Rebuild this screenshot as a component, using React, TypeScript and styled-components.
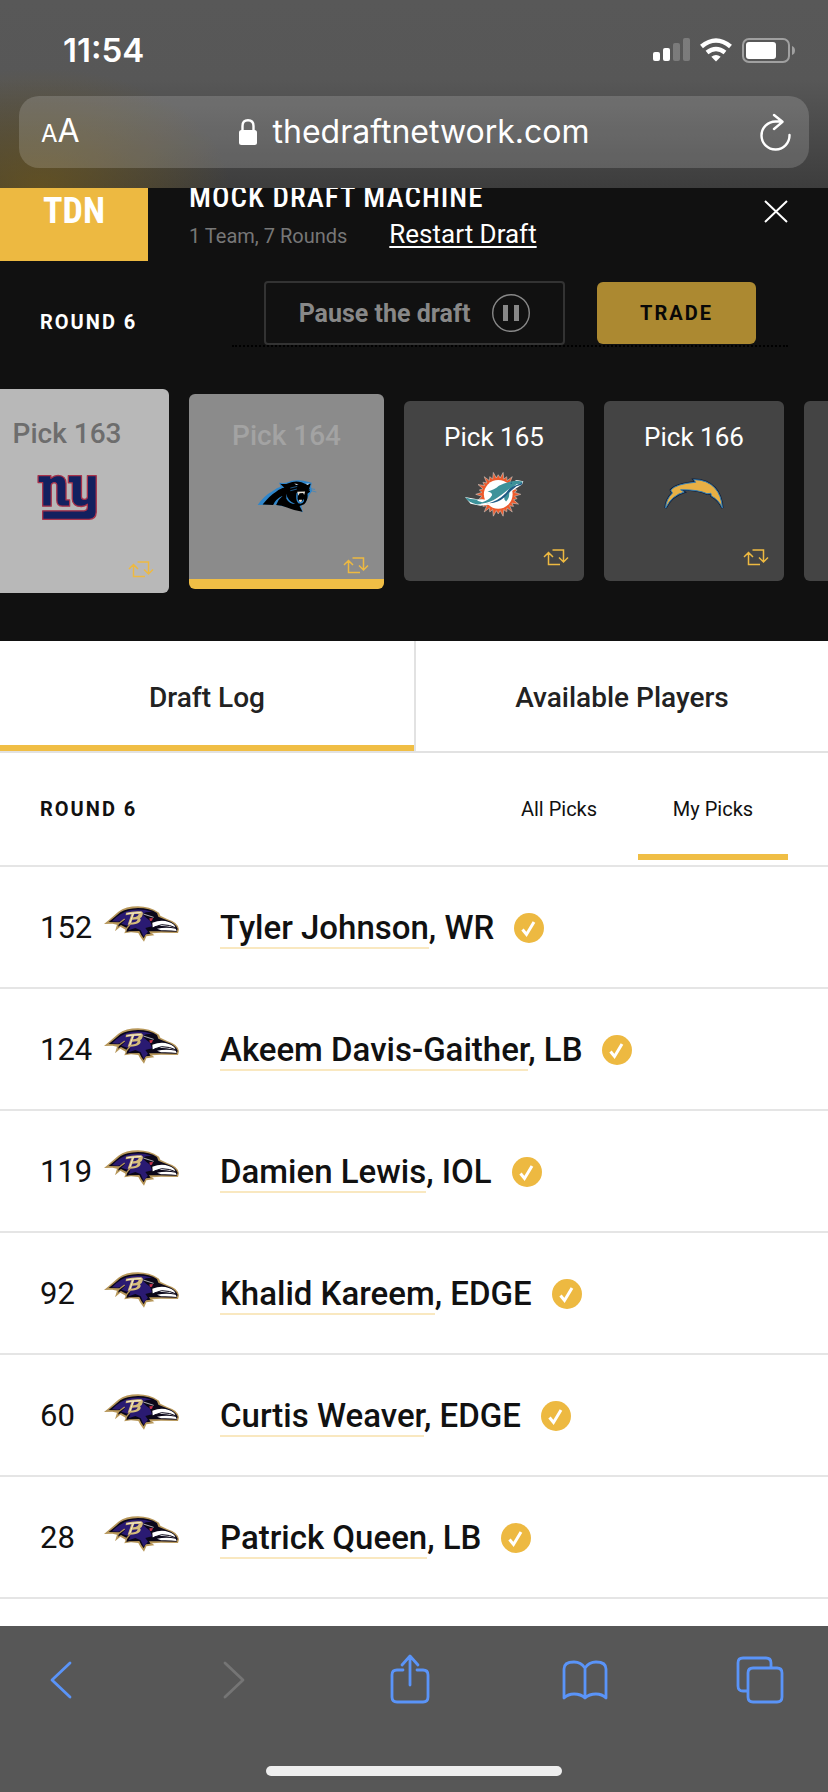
import styled, { createGlobalStyle } from "styled-components";

const GlobalStyle = createGlobalStyle`
  *, *::before, *::after {
    box-sizing: border-box;
  }

  body {
    margin: 0;
    background: #fff;
    color: #111;
    font-family: Roboto, "Noto Sans", sans-serif;
  }

  button {
    padding: 0;
    border: 0;
    background: none;
    color: inherit;
    font: inherit;
    cursor: pointer;
  }

  svg {
    display: block;
  }
`;

const Screen = styled.div`
  display: flex;
  flex-direction: column;
  min-height: 100vh;
  overflow: hidden;
`;

/* ---------- browser chrome ---------- */

const BrowserTop = styled.header`
  position: relative;
  z-index: 1;
  padding: 0 19px 20px;
  background:
    radial-gradient(ellipse 190px 120px at 40px 100%, rgba(112, 88, 24, 0.7), rgba(112, 88, 24, 0)),
    linear-gradient(#585858 0, #575757 80px, #3d3d3d 100%);
  color: #fff;
  font-family: Inter, sans-serif;
`;

const StatusBar = styled.div`
  display: flex;
  align-items: center;
  justify-content: space-between;
  height: 96px;
  padding: 4px 14px 0 44px;
`;

const Clock = styled.span`
  font-size: 33px;
  font-weight: 600;
  line-height: 40px;
`;

const StatusIcons = styled.div`
  display: flex;
  align-items: center;
  gap: 10px;
`;

const AddressBar = styled.div`
  display: grid;
  grid-template-columns: 1fr auto 1fr;
  align-items: center;
  height: 72px;
  padding: 0 18px 0 22px;
  border-radius: 20px;
  background: rgba(255, 255, 255, 0.16);
`;

const TextSizeButton = styled.button`
  justify-self: start;
  font-size: 32px;
  line-height: 40px;
`;

const SmallLetter = styled.span`
  font-size: 24px;
`;

const Address = styled.button`
  display: flex;
  align-items: center;
  gap: 16px;
  padding-right: 4px;
  font-size: 32px;
  line-height: 40px;
`;

const ReloadButton = styled.button`
  display: flex;
  justify-self: end;
`;

const BrowserBottom = styled.footer`
  display: flex;
  flex-direction: column;
  align-items: center;
  justify-content: space-between;
  height: 166px;
  margin-top: auto;
  padding: 28px 0 16px;
  background: #575757;
`;

const Toolbar = styled.nav`
  display: flex;
  align-items: center;
  justify-content: space-between;
  width: 100%;
  padding: 0 44px 0 36px;
`;

const ToolButton = styled.button<{ $disabled?: boolean }>`
  display: flex;
  color: ${({ $disabled }) => ($disabled ? "#757575" : "#5a94f8")};
`;

const HomeIndicator = styled.div`
  width: 296px;
  height: 10px;
  border-radius: 5px;
  background: #eee;
`;

/* ---------- draft header ---------- */

const DraftPanel = styled.section`
  padding-bottom: 48px;
  background: #111;
  color: #fff;
`;

// scrolled partly under the browser bar
const DraftHeader = styled.div`
  display: flex;
  height: 97px;
  margin-top: -24px;
`;

const Brand = styled.div`
  display: flex;
  align-items: center;
  justify-content: center;
  width: 148px;
  padding-bottom: 4px;
  background: #edb941;
  font-family: "Roboto Condensed", Roboto, sans-serif;
  font-size: 36px;
  font-weight: 700;
  line-height: 40px;
`;

const DraftInfo = styled.div`
  flex: 1;
  padding: 13px 0 0 41px;
`;

const DraftTitle = styled.h1`
  margin: 0;
  font-family: "Roboto Condensed", Roboto, sans-serif;
  font-size: 29px;
  font-weight: 500;
  letter-spacing: 1px;
  line-height: 40px;
`;

const DraftMeta = styled.div`
  display: flex;
  align-items: baseline;
  gap: 42px;
  color: #777;
  font-size: 20px;
  line-height: 34px;
`;

const RestartLink = styled.a`
  color: #fff;
  font-size: 26px;
  text-underline-offset: 3px;
`;

const CloseButton = styled.button`
  align-self: flex-start;
  margin: 35px 40px 0 0;
`;

const Controls = styled.div`
  display: flex;
  align-items: flex-end;
  justify-content: space-between;
  padding: 20px 40px 0;
`;

const RoundLabel = styled.h2`
  margin: 0;
  font-size: 20px;
  font-weight: 700;
  letter-spacing: 2px;
  line-height: 28px;
`;

const ControlsLabel = styled(RoundLabel)`
  padding-bottom: 11px;
`;

const Actions = styled.div`
  display: flex;
  align-items: center;
  gap: 32px;
  padding: 0 32px;
  border-bottom: 2px dotted #000;
`;

const PauseButton = styled.button`
  display: flex;
  align-items: center;
  justify-content: center;
  gap: 22px;
  min-width: 301px;
  height: 64px;
  border: 2px solid #333;
  border-radius: 4px;
  color: #888;
  font-size: 25px;
  font-weight: 700;
`;

const TradeButton = styled.button`
  min-width: 159px;
  height: 62px;
  border-radius: 6px;
  background: #ac8931;
  color: #080808;
  font-size: 20px;
  font-weight: 700;
  letter-spacing: 2px;
`;

const PickRail = styled.ol`
  display: flex;
  align-items: center;
  gap: 20px;
  margin: 42px 0 0 -35px;
  padding: 0;
  list-style: none;
`;

type CardState = "past" | "current" | "next";

const cardStyles = {
  past: { size: 204, top: 29, gap: 17, text: 28, weight: 500, color: "#6d6d6d", background: "#b8b8b8" },
  current: {
    size: 195,
    top: 26,
    gap: 14,
    text: 28,
    weight: 500,
    color: "#a3a3a3",
    background: "linear-gradient(#8b8b8b 185px, #f0be45 185px)",
  },
  next: { size: 180, top: 20, gap: 11, text: 26, weight: 400, color: "#fff", background: "#444" },
};

const PickCard = styled.li<{ $state: CardState }>`
  display: flex;
  flex: none;
  flex-direction: column;
  align-items: center;
  gap: ${({ $state }) => cardStyles[$state].gap}px;
  width: ${({ $state }) => cardStyles[$state].size}px;
  height: ${({ $state }) => cardStyles[$state].size}px;
  padding-top: ${({ $state }) => cardStyles[$state].top}px;
  border-radius: 6px;
  background: ${({ $state }) => cardStyles[$state].background};
  color: ${({ $state }) => cardStyles[$state].color};
  font-size: ${({ $state }) => cardStyles[$state].text}px;
  font-weight: ${({ $state }) => cardStyles[$state].weight};
  line-height: 32px;
`;

const TeamLogo = styled.div`
  display: flex;
  align-items: center;
  height: 60px;
`;

const SwapIcon = styled.svg`
  align-self: flex-end;
  margin: auto 15px 15px 0;
`;

/* ---------- draft log ---------- */

const Tabs = styled.div`
  display: grid;
  grid-template-columns: 1fr 1fr;
  border-bottom: 2px solid #e2e2e2;
`;

const Tab = styled.button<{ $active?: boolean }>`
  height: 110px;
  padding-top: ${({ $active }) => ($active ? 8 : 2)}px;
  border-bottom: ${({ $active }) => ($active ? "6px solid #f0be45" : "0")};
  color: #222;
  font-size: 28px;
  font-weight: 500;

  & + & {
    border-left: 2px solid #e2e2e2;
  }
`;

const LogHeader = styled.div`
  display: flex;
  align-items: center;
  justify-content: space-between;
  height: 114px;
  padding: 0 40px;
  border-bottom: 2px solid #e5e5e5;
`;

const Filters = styled.div`
  display: flex;
  align-self: flex-end;
  gap: 4px;
  padding-bottom: 5px;
`;

const Filter = styled.button<{ $active?: boolean }>`
  width: 150px;
  height: 107px;
  padding-top: 10px;
  border-bottom: 6px solid ${({ $active }) => ($active ? "#f0be45" : "transparent")};
  font-size: 20px;
`;

const LogList = styled.ul`
  margin: 0;
  padding: 0 0 27px;
  list-style: none;
`;

const LogRow = styled.li`
  display: flex;
  align-items: center;
  height: 122px;
  padding: 2px 40px 0;
  border-bottom: 2px solid #e5e5e5;
`;

const PickNumber = styled.span`
  width: 64px;
  font-size: 31px;
  line-height: 40px;
`;

const RowLogo = styled.div`
  padding-bottom: 8px;
`;

const PlayerText = styled.span`
  margin: 0 20px 0 40px;
  font-size: 33px;
  font-weight: 500;
  line-height: 40px;
`;

const PlayerLink = styled.a`
  border-bottom: 2px solid #f9e8c0;
  color: inherit;
  text-decoration: none;
`;

/* ---------- drawings ---------- */

const Giants = () => (
  <svg width="60" height="46" viewBox="50 70 182 140" aria-label="New York Giants">
    <g fill="#12205f" stroke="#a8324a" strokeWidth="4" strokeLinejoin="round">
      <path d="M53 75H92V83Q102 74 114 74Q138 75 138 99V149H149V168H127Q110 168 110 150V105Q110 96 102 96Q93 97 93 106V168H67V96H53Z" />
      <path d="M145 75H185V139Q185 147 194 147Q203 147 203 139V75H230V186Q229 208 208 208H67V182H193Q203 181 203 170V162Q196 169 185 169Q157 168 157 145V97H145Z" />
    </g>
  </svg>
);

const Panthers = () => (
  <svg width="60" height="34" viewBox="50 56 182 102" aria-label="Carolina Panthers">
    <path fill="#2f86cb" d="M52 134Q72 106 98 92Q110 82 122 79L117 67Q130 68 139 67Q163 56 191 61L216 67L214 79L217 92L208 105L198 126L184 138L189 156L160 144L102 133Z" />
    <path fill="#000" d="M67 133Q88 106 108 94Q122 83 133 82L120 70Q137 72 145 68Q164 60 185 65L199 71L213 70L209 82L211 94L203 100Q206 119 193 132L179 137L188 155Q162 151 141 142Q125 134 108 134Q114 117 128 106Q106 116 99 134Z" />
    <path fill="#2f86cb" d="M139 100Q142 122 166 131Q148 131 139 115ZM170 98L174 96L173 116Q178 129 187 123L191 116L193 122Q187 134 175 129Q166 119 170 98Z" />
    <path fill="#e6dfd5" d="M172 94L196 93L193 104L190 98L179 99L176 106ZM178 118L187 118L184 126L177 123Z" />
    <path fill="#d8e6ef" d="M163 69L176 71L169 74ZM197 70L210 69L204 74Z" />
    <path stroke="#2f86cb" strokeWidth="2" d="M151 83L172 78M151 91L171 86M208 84L226 87M207 89L230 95" />
  </svg>
);

const sunPoints = Array.from({ length: 56 }, (_, i) => {
  const angle = (i * Math.PI) / 28;
  const radius = i % 2 ? 50 : i % 4 ? 60 : 69;
  return `${Math.round(775 + radius * Math.cos(angle))},${Math.round(103 + radius * Math.sin(angle))}`;
}).join(" ");

const Dolphins = () => (
  <svg width="60" height="46" viewBox="670 32 184 140" aria-label="Miami Dolphins">
    <polygon points={sunPoints} fill="#ee5a2b" stroke="#c9bfba" strokeWidth="2" />
    <circle cx="775" cy="103" r="44" fill="#fff" />
    <path fill="#fff" d="M673 111L711 118L736 119Q766 105 788 82L831 59L852 63L848 73L807 100L798 126L784 119L762 133L720 138L690 132Z" />
    <path fill="#3d929a" d="M673 112Q694 120 712 119L711 123L726 127Q747 122 756 106Q757 97 742 94Q763 90 777 77Q799 64 832 61L850 64L847 70L831 72Q809 88 798 101Q785 116 770 123Q744 134 710 134Q684 128 673 112ZM793 110L809 95Q810 116 799 125L794 119Z" />
    <path fill="#205b86" d="M755 124Q779 117 800 94Q818 77 835 73L849 67L847 74L831 78Q812 93 795 111Q775 129 748 130Z" />
    <path fill="#fff" d="M722 132Q751 128 771 114Q796 97 810 84Q801 98 784 112Q761 130 722 135Z" />
    <circle cx="815" cy="69" r="2" fill="#205b86" />
  </svg>
);

const boltPath =
  "M75 144Q76 118 96 98L91 89Q107 70 167 65L161 57Q203 57 226 83Q246 105 249 144Q238 119 215 107L214 99L202 100Q174 87 121 88L132 95Q94 105 75 144Z";

const Chargers = () => (
  <svg width="60" height="32" viewBox="71 52 182 98" aria-label="Los Angeles Chargers">
    <path fill="#11203a" stroke="#11203a" strokeWidth="7" d={boltPath} />
    <path fill="#e7b045" stroke="#337db4" strokeWidth="3" d={boltPath} />
  </svg>
);

const Ravens = () => (
  <svg width="76" height="38" viewBox="42 48 228 114" aria-label="Baltimore Ravens">
    <path fill="#b7975a" d="M42 105Q68 83 85 68Q107 52 144 52Q178 52 207 71L211 80L233 91Q263 99 267 121L264 132L213 131L186 133L193 139L169 142L162 158L151 143L145 132L123 130L103 133L107 122L91 113L75 127L81 107L67 104Z" />
    <path fill="#0b0719" d="M56 99Q75 84 91 70Q110 58 144 57Q179 57 201 72L205 83L231 94Q256 102 263 119L260 128L206 127L177 127L182 134L167 136L161 148L154 138L148 126L117 127L109 129L112 118L93 108L84 113L88 100Z" />
    <path fill="#2a1a72" d="M66 97Q92 70 120 64Q153 57 186 68L168 70L157 76Q168 87 180 95L186 112L166 117L174 128L161 143L152 124L136 117L116 124L121 113L94 104L106 92L84 98Z" />
    <path fill="#fff" d="M187 101Q214 91 236 99Q253 104 257 116L229 112L207 110L188 115Z" />
    <path fill="#fff" d="M201 119Q229 114 257 119L260 126Q239 123 213 124Z" />
    <path fill="none" stroke="#0b0719" strokeWidth="3" d="M193 114L215 107Q240 107 259 117" />
    <path fill="#d5bc7b" fillRule="evenodd" d="M108 71Q132 65 153 67Q161 69 158 77Q156 85 150 88Q155 93 148 100Q140 108 113 107L124 76L107 79ZM133 75L129 85Q145 84 146 75ZM127 92L124 101Q141 101 143 91Z" />
    <path fill="none" stroke="#fff" strokeWidth="2" d="M112 74L154 70M130 73L119 104M160 75L191 85" />
    <path fill="#c5304a" d="M178 88L189 87L186 95L180 96Z" />
    <path fill="none" stroke="#b7975a" strokeWidth="4" d="M81 107L104 90M107 122L122 104" />
  </svg>
);

const Swap = () => (
  <SwapIcon width="26" height="17" viewBox="0 0 26 17" fill="none" stroke="#edb941" strokeWidth="1.5">
    <path d="M1 8L5.5 3.5L10 8M5.5 4V15.5H17M9.5 1H20.5V12M16 8.5L20.5 13L25 8.5" />
  </SwapIcon>
);

const Check = () => (
  <svg width="30" height="30" viewBox="0 0 30 30" aria-label="My pick">
    <circle cx="15" cy="15" r="15" fill="#edb941" />
    <path d="M8.5 16.5L12.5 21.5L20 9" fill="none" stroke="#fff" strokeWidth="3" />
  </svg>
);

const SignalIcon = () => (
  <svg width="37" height="24" viewBox="0 0 37 24" fill="#fff">
    <rect y="14" width="7" height="9" rx="2" />
    <rect x="10" y="10" width="7" height="13" rx="2" />
    <rect x="20" y="5" width="7" height="18" rx="2" opacity=".22" />
    <rect x="30" width="7" height="23" rx="2" opacity=".22" />
  </svg>
);

const WifiIcon = () => (
  <svg width="32" height="24" viewBox="0 0 32 24" fill="none" stroke="#fff" strokeWidth="4.5">
    <path d="M1.5 8.5Q16-3.5 30.5 8.5M7 14.5Q16 7.5 25 14.5" />
    <path d="M16 23.5L11.3 18.7Q16 15.5 20.7 18.7Z" fill="#fff" stroke="none" />
  </svg>
);

const BatteryIcon = () => (
  <svg width="53" height="25" viewBox="0 0 53 25">
    <rect x="1" y="1" width="46" height="23" rx="6" fill="none" stroke="#a0a0a0" strokeWidth="2" />
    <rect x="4" y="4" width="30" height="17" rx="3" fill="#fff" />
    <path d="M50 8Q53 9 53 12.5Q53 16 50 17Z" fill="#a0a0a0" />
  </svg>
);

const LockIcon = () => (
  <svg width="18" height="26" viewBox="0 0 18 26">
    <path d="M3.5 13V7Q3.5 1.2 9 1.2Q14.5 1.2 14.5 7V13" fill="none" stroke="#fff" strokeWidth="2.4" />
    <rect y="11" width="18" height="15" rx="2.5" fill="#fff" />
  </svg>
);

const ReloadIcon = () => (
  <svg
    width="32"
    height="38"
    viewBox="0 0 32 38"
    fill="none"
    stroke="#fff"
    strokeWidth="2.4"
    strokeLinecap="round"
    strokeLinejoin="round"
  >
    <path d="M30.5 22A14 14 0 1 1 16.5 8.5H22M15 2L23.5 8.8L15 16" />
  </svg>
);

const CloseIcon = () => (
  <svg width="24" height="24" viewBox="0 0 24 24" fill="none" stroke="#fff" strokeWidth="2">
    <path d="M1 2L23 23M23 2L1 23" />
  </svg>
);

const PauseIcon = () => (
  <svg width="38" height="38" viewBox="0 0 38 38">
    <circle cx="19" cy="19" r="18.3" fill="none" stroke="#888" strokeWidth="1.4" />
    <path d="M11 11H16V27H11ZM22 11H27V27H22Z" fill="#888" />
  </svg>
);

const ToolIcon = ({ d }: { d: string }) => (
  <svg
    width="48"
    height="52"
    viewBox="0 0 48 52"
    fill="none"
    stroke="currentColor"
    strokeWidth="2.8"
    strokeLinecap="round"
    strokeLinejoin="round"
  >
    <path d={d} />
  </svg>
);

/* ---------- data ---------- */

const picks: { number: number | null; state: CardState; logo: React.ReactNode }[] = [
  { number: 163, state: "past", logo: <Giants /> },
  { number: 164, state: "current", logo: <Panthers /> },
  { number: 165, state: "next", logo: <Dolphins /> },
  { number: 166, state: "next", logo: <Chargers /> },
  { number: null, state: "next", logo: null },
];

const players = [
  { pick: 152, name: "Tyler Johnson", position: "WR" },
  { pick: 124, name: "Akeem Davis-Gaither", position: "LB" },
  { pick: 119, name: "Damien Lewis", position: "IOL" },
  { pick: 92, name: "Khalid Kareem", position: "EDGE" },
  { pick: 60, name: "Curtis Weaver", position: "EDGE" },
  { pick: 28, name: "Patrick Queen", position: "LB" },
];

export default function App() {
  return (
    <Screen>
      <GlobalStyle />
      <BrowserTop>
        <StatusBar>
          <Clock>11:54</Clock>
          <StatusIcons>
            <SignalIcon />
            <WifiIcon />
            <BatteryIcon />
          </StatusIcons>
        </StatusBar>
        <AddressBar>
          <TextSizeButton>
            <SmallLetter>A</SmallLetter>A
          </TextSizeButton>
          <Address>
            <LockIcon />
            thedraftnetwork.com
          </Address>
          <ReloadButton aria-label="Reload">
            <ReloadIcon />
          </ReloadButton>
        </AddressBar>
      </BrowserTop>

      <DraftPanel>
        <DraftHeader>
          <Brand>TDN</Brand>
          <DraftInfo>
            <DraftTitle>MOCK DRAFT MACHINE</DraftTitle>
            <DraftMeta>
              1 Team, 7 Rounds
              <RestartLink href="#restart">Restart Draft</RestartLink>
            </DraftMeta>
          </DraftInfo>
          <CloseButton aria-label="Close">
            <CloseIcon />
          </CloseButton>
        </DraftHeader>

        <Controls>
          <ControlsLabel>ROUND 6</ControlsLabel>
          <Actions>
            <PauseButton>
              Pause the draft
              <PauseIcon />
            </PauseButton>
            <TradeButton>TRADE</TradeButton>
          </Actions>
        </Controls>

        <PickRail>
          {picks.map(({ number, state, logo }, index) => (
            <PickCard key={index} $state={state}>
              {number && (
                <>
                  <span>Pick {number}</span>
                  <TeamLogo>{logo}</TeamLogo>
                  <Swap />
                </>
              )}
            </PickCard>
          ))}
        </PickRail>
      </DraftPanel>

      <main>
        <Tabs>
          <Tab $active>Draft Log</Tab>
          <Tab>Available Players</Tab>
        </Tabs>
        <LogHeader>
          <RoundLabel>ROUND 6</RoundLabel>
          <Filters>
            <Filter>All Picks</Filter>
            <Filter $active>My Picks</Filter>
          </Filters>
        </LogHeader>
        <LogList>
          {players.map(({ pick, name, position }) => (
            <LogRow key={pick}>
              <PickNumber>{pick}</PickNumber>
              <RowLogo>
                <Ravens />
              </RowLogo>
              <PlayerText>
                <PlayerLink href="#player">{name}</PlayerLink>, {position}
              </PlayerText>
              <Check />
            </LogRow>
          ))}
        </LogList>
      </main>

      <BrowserBottom>
        <Toolbar>
          <ToolButton aria-label="Back">
            <ToolIcon d="M34 9L16 26L34 43" />
          </ToolButton>
          <ToolButton aria-label="Forward" $disabled>
            <ToolIcon d="M14 9L32 26L14 43" />
          </ToolButton>
          <ToolButton aria-label="Share">
            <ToolIcon d="M17 16H11Q6 16 6 21V43Q6 48 11 48H37Q42 48 42 43V21Q42 16 37 16H31M24 31V3M16 11L24 2L32 11" />
          </ToolButton>
          <ToolButton aria-label="Bookmarks">
            <ToolIcon d="M24 44V14Q20 8 13 8Q3 8 3 15V44Q7 40 13 40Q20 40 24 44Q28 40 35 40Q41 40 45 44V15Q45 8 35 8Q28 8 24 14" />
          </ToolButton>
          <ToolButton aria-label="Tabs">
            <ToolIcon d="M12 37H7Q2 37 2 32V9Q2 4 7 4H30Q35 4 35 9V14M17 14H41Q46 14 46 19V43Q46 48 41 48H17Q12 48 12 43V19Q12 14 17 14Z" />
          </ToolButton>
        </Toolbar>
        <HomeIndicator />
      </BrowserBottom>
    </Screen>
  );
}
